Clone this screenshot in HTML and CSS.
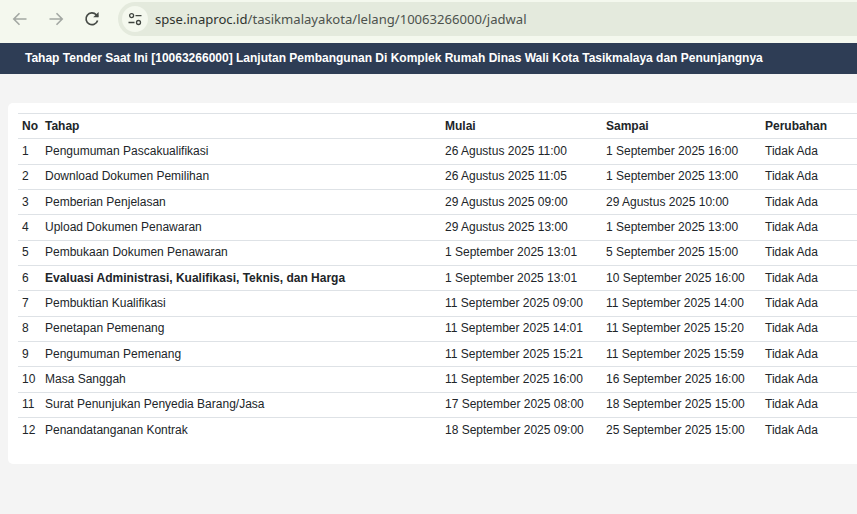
FILE: index.html
```html
<!DOCTYPE html>
<html lang="id">
<head>
<meta charset="utf-8">
<title>Jadwal</title>
<link rel="stylesheet" href="styles.css">
</head>
<body>
<div class="toolbar">
  <svg class="nav nav-back" width="18" height="18" viewBox="0 0 18 18"><path d="M15.5 9H3M8.5 3.3 2.8 9l5.7 5.700" fill="none" stroke="#a3a8a3" stroke-width="1.6"/></svg>
  <svg class="nav nav-fwd" width="18" height="18" viewBox="0 0 18 18"><path d="M2.500 9H15M9.500 3.300 15.200 9l-5.700 5.700" fill="none" stroke="#a3a8a3" stroke-width="1.600"/></svg>
  <svg class="nav nav-reload" width="18" height="18" viewBox="0 0 18 18"><path d="M14.600 10.500A5.900 5.900 0 1 1 13.300 4.800L15 6.600" fill="none" stroke="#454a45" stroke-width="1.700"/><path d="M15.600 1.900V7.300H10.200Z" fill="#454a45"/></svg>
  <div class="omnibox">
    <span class="site-chip"><svg width="14" height="14" viewBox="0 0 14 14"><g fill="none" stroke="#3f443f" stroke-width="1.300"><circle cx="3.600" cy="3.600" r="2"/><path d="M7.500 3.600H13.500M.5 10.500H6.500"/><circle cx="10.500" cy="10.500" r="2"/></g></svg></span>
    <span class="url">spse.inaproc.id<span class="url-path">/tasikmalayakota/lelang/10063266000/jadwal</span></span>
  </div>
</div>
<div class="stage-bar">Tahap Tender Saat Ini [10063266000] Lanjutan Pembangunan Di Komplek Rumah Dinas Wali Kota Tasikmalaya dan Penunjangnya</div>
<main class="card">
  <table class="schedule">
    <thead>
      <tr><th class="c-no">No</th><th class="c-stage">Tahap</th><th class="c-start">Mulai</th><th class="c-end">Sampai</th><th class="c-change">Perubahan</th></tr>
    </thead>
    <tbody>
      <tr><td>1</td><td>Pengumuman Pascakualifikasi</td><td>26 Agustus 2025 11:00</td><td>1 September 2025 16:00</td><td>Tidak Ada</td></tr>
      <tr><td>2</td><td>Download Dokumen Pemilihan</td><td>26 Agustus 2025 11:05</td><td>1 September 2025 13:00</td><td>Tidak Ada</td></tr>
      <tr><td>3</td><td>Pemberian Penjelasan</td><td>29 Agustus 2025 09:00</td><td>29 Agustus 2025 10:00</td><td>Tidak Ada</td></tr>
      <tr><td>4</td><td>Upload Dokumen Penawaran</td><td>29 Agustus 2025 13:00</td><td>1 September 2025 13:00</td><td>Tidak Ada</td></tr>
      <tr><td>5</td><td>Pembukaan Dokumen Penawaran</td><td>1 September 2025 13:01</td><td>5 September 2025 15:00</td><td>Tidak Ada</td></tr>
      <tr><td>6</td><td class="current">Evaluasi Administrasi, Kualifikasi, Teknis, dan Harga</td><td>1 September 2025 13:01</td><td>10 September 2025 16:00</td><td>Tidak Ada</td></tr>
      <tr><td>7</td><td>Pembuktian Kualifikasi</td><td>11 September 2025 09:00</td><td>11 September 2025 14:00</td><td>Tidak Ada</td></tr>
      <tr><td>8</td><td>Penetapan Pemenang</td><td>11 September 2025 14:01</td><td>11 September 2025 15:20</td><td>Tidak Ada</td></tr>
      <tr><td>9</td><td>Pengumuman Pemenang</td><td>11 September 2025 15:21</td><td>11 September 2025 15:59</td><td>Tidak Ada</td></tr>
      <tr><td>10</td><td>Masa Sanggah</td><td>11 September 2025 16:00</td><td>16 September 2025 16:00</td><td>Tidak Ada</td></tr>
      <tr><td>11</td><td>Surat Penunjukan Penyedia Barang/Jasa</td><td>17 September 2025 08:00</td><td>18 September 2025 15:00</td><td>Tidak Ada</td></tr>
      <tr><td>12</td><td>Penandatanganan Kontrak</td><td>18 September 2025 09:00</td><td>25 September 2025 15:00</td><td>Tidak Ada</td></tr>
    </tbody>
  </table>
</main>
</body>
</html>
```
FILE: styles.css
```css
* { box-sizing: border-box; }
html, body { margin: 0; height: 514px; overflow: hidden; }
body {
  background: #f4f4f4;
  color: #212529;
  font-family: "Liberation Sans", Arial, sans-serif;
  font-size: 12px;
}
.toolbar {
  height: 43px;
  background: #f4f8ee;
  display: flex;
  align-items: flex-start;
  padding-top: 2px;
}
.nav { flex: none; margin-top: 8px; }
.nav-back { margin-left: 11px; }
.nav-fwd { margin-left: 18px; }
.nav-reload { margin-left: 18px; margin-right: 17px; }
.omnibox {
  flex: 1;
  height: 34px;
  margin-right: -30px;
  background: #e4eadd;
  border-radius: 17px;
  display: flex;
  align-items: center;
  padding-left: 4px;
}
.site-chip {
  width: 26px;
  height: 26px;
  border-radius: 50%;
  background: #f4f8ee;
  display: flex;
  align-items: center;
  justify-content: center;
}
.url {
  margin-left: 7px;
  font-family: "Noto Sans", "Open Sans", sans-serif;
  font-size: 13.08px;
  color: #2f332f;
  white-space: nowrap;
}
.url-path { color: #4d524d; }
.stage-bar {
  height: 31px;
  background: #2e3d55;
  color: #fff;
  font-weight: 700;
  line-height: 31px;
  padding-left: 25px;
  white-space: nowrap;
}
.card {
  width: 880px;
  height: 361px;
  margin: 29px 0 0 8px;
  padding-top: 10px;
  padding-left: 10px;
  background: #fff;
  border-radius: 5px;
}
.schedule {
  width: 880px;
  table-layout: fixed;
  border-collapse: collapse;
}
.schedule th, .schedule td {
  height: 25.33px;
  padding: 0 0 1px 4px;
  border-top: 1px solid #dee2e6;
  text-align: left;
  white-space: nowrap;
  vertical-align: middle;
}
.schedule th { font-weight: 700; padding-bottom: 0; }
.c-no { width: 23px; }
.c-stage { width: 400px; }
.c-start { width: 161px; }
.c-end { width: 159px; }
.schedule td.current { font-weight: 700; }
```
